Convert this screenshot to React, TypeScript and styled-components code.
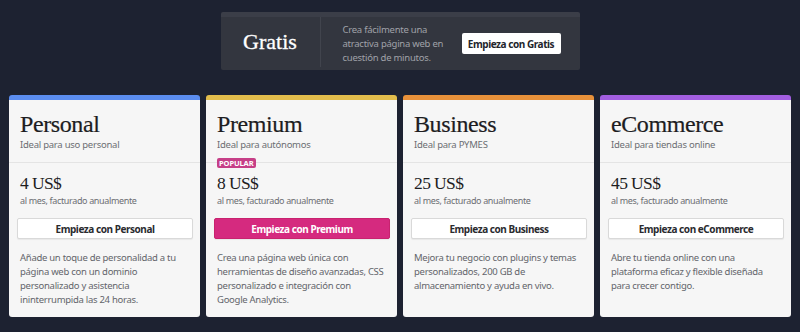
import React from "react";
import styled, { createGlobalStyle } from "styled-components";

const GlobalStyle = createGlobalStyle`
  html, body {
    margin: 0;
    padding: 0;
    background: #1d2231;
  }
  body {
    font-family: "Noto Sans", "Open Sans", sans-serif;
    font-stretch: semi-condensed;
  }
`;

const Page = styled.div`
  box-sizing: border-box;
  height: 332px;
  padding: 12px 9px 0;
`;

const Hero = styled.div`
  align-items: center;
  background: #33363f;
  border-top: 5px solid #3b3e48;
  border-radius: 2px;
  box-sizing: border-box;
  display: flex;
  height: 58px;
  margin: 0 auto 25px;
  width: 359px;
`;

const HeroTitle = styled.div`
  align-self: stretch;
  align-items: center;
  border-right: 1px solid #41444d;
  color: #ffffff;
  display: flex;
  font-family: "Liberation Serif", serif;
  font-size: 22px;
  justify-content: center;
  margin: 0 0 3px;
  -webkit-text-stroke: 0.3px #ffffff;
  width: 99px;
`;

const HeroText = styled.div`
  color: #a0a2a9;
  font-size: 9.5px;
  letter-spacing: -0.25px;
  line-height: 14px;
  margin: 0 0 0 22px;
  white-space: pre-line;
  width: 112px;
`;

const HeroButton = styled.button`
  background: #ffffff;
  border: none;
  border-radius: 2px;
  color: #23252b;
  font-family: "Noto Sans", sans-serif;
  font-size: 10px;
  font-stretch: semi-condensed;
  font-weight: 700;
  height: 21px;
  letter-spacing: -0.45px;
  margin: 0 0 0 7px;
  padding: 0;
  width: 99px;
`;

const Grid = styled.div`
  display: grid;
  gap: 6px;
  grid-template-columns: repeat(4, 1fr);
`;

const Card = styled.div<{ $accent: string }>`
  background: #f6f6f6;
  border-radius: 3px;
  border-top: 5px solid ${(p) => p.$accent};
  display: flex;
  flex-direction: column;
  height: 222px;
  box-sizing: border-box;
`;

const Header = styled.div`
  border-bottom: 1px solid #e4e4e4;
  padding: 10px 11px 10px;
  position: relative;
`;

const Title = styled.div`
  color: #1d1d1f;
  font-family: "Liberation Serif", serif;
  font-size: 24px;
  letter-spacing: -0.4px;
  line-height: 28px;
  -webkit-text-stroke: 0.2px #1d1d1f;
`;

const Subtitle = styled.div`
  color: #6c6e73;
  font-size: 9.5px;
  letter-spacing: -0.25px;
  line-height: 14px;
`;

const Badge = styled.span`
  background: #c63f87;
  border-radius: 2px;
  bottom: -6px;
  color: #ffffff;
  font-size: 7.5px;
  font-weight: 700;
  height: 10px;
  left: 11px;
  letter-spacing: -0.1px;
  line-height: 10px;
  padding: 0 2px;
  position: absolute;
`;

const Body = styled.div`
  padding: 9px 7px 0 8px;
`;

const Price = styled.div`
  color: #1d1d1f;
  font-family: "Liberation Serif", serif;
  font-size: 17.5px;
  letter-spacing: -0.6px;
  line-height: 22px;
  padding-left: 3px;
`;

const Billing = styled.div`
  color: #6c6e73;
  font-size: 9px;
  letter-spacing: -0.35px;
  line-height: 13px;
  padding-left: 3px;
`;

const Button = styled.button<{ $primary?: boolean }>`
  background: ${(p) => (p.$primary ? "#d52a7f" : "#ffffff")};
  border: 1px solid ${(p) => (p.$primary ? "#c8236f" : "#d9d9d9")};
  border-radius: 2px;
  box-shadow: 0 1px 1px rgba(0, 0, 0, 0.06);
  color: ${(p) => (p.$primary ? "#ffffff" : "#2a2b2f")};
  display: block;
  font-family: "Noto Sans", sans-serif;
  font-size: 10px;
  font-stretch: semi-condensed;
  font-weight: 700;
  height: 21px;
  letter-spacing: -0.45px;
  margin-top: 11px;
  padding: 0;
  width: 100%;
`;

const Description = styled.div`
  color: #63656b;
  font-size: 9.5px;
  letter-spacing: -0.28px;
  line-height: 14px;
  padding: 12px 0 0 3px;
  white-space: pre-line;
`;

const plans = [
  {
    name: "Personal",
    tagline: "Ideal para uso personal",
    price: "4 US$",
    accent: "#5b8def",
    text: "Añade un toque de personalidad a tu\npágina web con un dominio\npersonalizado y asistencia\nininterrumpida las 24 horas.",
  },
  {
    name: "Premium",
    tagline: "Ideal para autónomos",
    price: "8 US$",
    accent: "#e2bd4c",
    popular: true,
    text: "Crea una página web única con\nherramientas de diseño avanzadas, CSS\npersonalizado e integración con\nGoogle Analytics.",
  },
  {
    name: "Business",
    tagline: "Ideal para PYMES",
    price: "25 US$",
    accent: "#e8913a",
    text: "Mejora tu negocio con plugins y temas\npersonalizados, 200 GB de\nalmacenamiento y ayuda en vivo.",
  },
  {
    name: "eCommerce",
    tagline: "Ideal para tiendas online",
    price: "45 US$",
    accent: "#a25ee0",
    text: "Abre tu tienda online con una\nplataforma eficaz y flexible diseñada\npara crecer contigo.",
  },
];

export default function App() {
  return (
    <Page>
      <GlobalStyle />
      <Hero>
        <HeroTitle>Gratis</HeroTitle>
        <HeroText>{"Crea fácilmente una\natractiva página web en\ncuestión de minutos."}</HeroText>
        <HeroButton>Empieza con Gratis</HeroButton>
      </Hero>
      <Grid>
        {plans.map((plan) => (
          <Card key={plan.name} $accent={plan.accent}>
            <Header>
              <Title>{plan.name}</Title>
              <Subtitle>{plan.tagline}</Subtitle>
              {plan.popular && <Badge>POPULAR</Badge>}
            </Header>
            <Body>
              <Price>{plan.price}</Price>
              <Billing>al mes, facturado anualmente</Billing>
              <Button $primary={plan.popular}>Empieza con {plan.name}</Button>
              <Description>{plan.text}</Description>
            </Body>
          </Card>
        ))}
      </Grid>
    </Page>
  );
}
